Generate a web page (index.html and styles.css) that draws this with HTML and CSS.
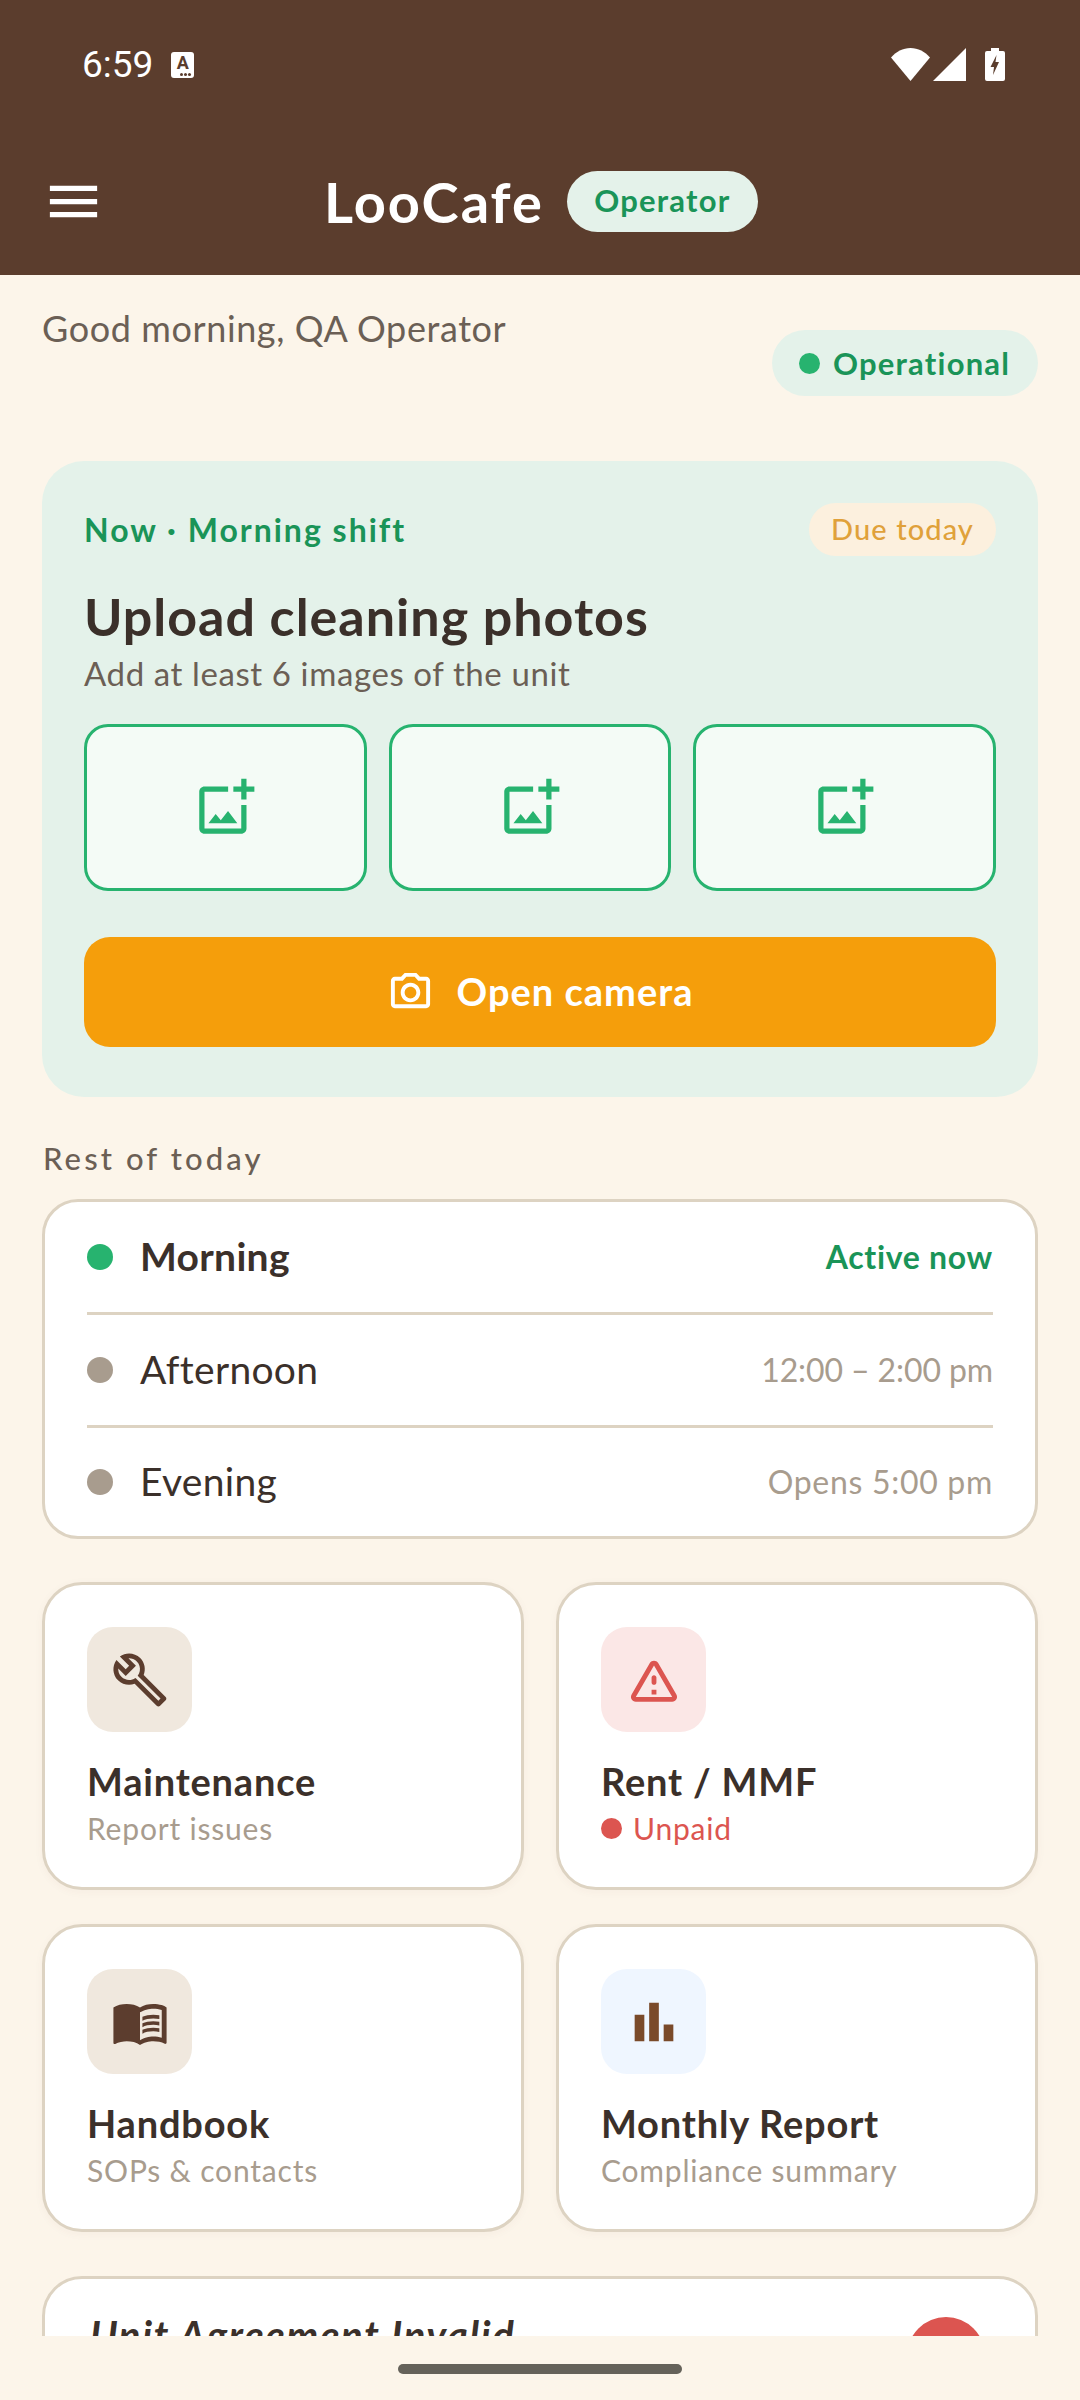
FILE: index.html
```html
<!DOCTYPE html>
<html lang="en">
<head>
    <meta charset="UTF-8">
    <meta name="viewport" content="width=device-width, initial-scale=1.0">
    <title>LooCafe</title>
    <link rel="stylesheet" href="styles.css">
</head>
<body>
    <header class="app-bar">
        <div class="status-bar">
            <div class="status-left">
                <span class="clock">6:59</span>
                <span class="a-badge">A</span>
            </div>
            <div class="status-right">
                <svg class="wifi" viewBox="0 0 39 33"><path d="M0 9.5C5 3.6 12 0 19.5 0S34 3.6 39 9.5L19.5 33z"/></svg>
                <svg class="signal" viewBox="0 0 33 33"><path d="M33 0v33H0z"/></svg>
                <svg class="battery" viewBox="0 0 20 33"><path fill-rule="evenodd" d="M6 0h8v3h4a2 2 0 0 1 2 2v26a2 2 0 0 1-2 2H2a2 2 0 0 1-2-2V5a2 2 0 0 1 2-2h4zM11.500 7 5.500 19h3.500l-1 8 6-13h-3.500z"/></svg>
            </div>
        </div>
        <div class="toolbar">
            <svg class="menu-icon" viewBox="0 0 24 24"><path d="M3 18h18v-2H3v2zm0-5h18v-2H3v2zm0-7v2h18V6H3z"/></svg>
            <div class="brand">
                <span class="brand-name">LooCafe</span>
                <span class="role-pill">Operator</span>
            </div>
        </div>
    </header>

    <main class="content">
        <div class="greeting-row">
            <div class="greeting">Good morning, QA Operator</div>
            <div class="state-pill"><span class="state-dot"></span>Operational</div>
        </div>

        <section class="now-card">
            <div class="now-head">
                <span class="now-label">Now · Morning shift</span>
                <span class="due-pill">Due today</span>
            </div>
            <h1 class="now-title">Upload cleaning photos</h1>
            <p class="now-sub">Add at least 6 images of the unit</p>
            <div class="photo-row">
                <div class="photo-slot"><svg viewBox="0 0 24 24"><use href="#add-photo"/></svg></div>
                <div class="photo-slot"><svg viewBox="0 0 24 24"><use href="#add-photo"/></svg></div>
                <div class="photo-slot"><svg viewBox="0 0 24 24"><use href="#add-photo"/></svg></div>
            </div>
            <div class="camera-btn">
                <svg viewBox="0 0 24 24"><path d="M20 4h-3.170L15 2H9L7.170 4H4c-1.100 0-2 .9-2 2v12c0 1.100.9 2 2 2h16c1.100 0 2-.9 2-2V6c0-1.100-.9-2-2-2zm0 14H4V6h4.050l1.830-2h4.240l1.830 2H20v12zM12 7c-2.760 0-5 2.240-5 5s2.240 5 5 5 5-2.240 5-5-2.240-5-5-5zm0 8c-1.650 0-3-1.350-3-3s1.350-3 3-3 3 1.350 3 3-1.350 3-3 3z"/></svg>
                <span class="camera-text">Open camera</span>
            </div>
        </section>

        <div class="section-label">Rest of today</div>
        <section class="shift-list">
            <div class="shift-row">
                <span class="shift-dot active"></span>
                <span class="shift-name active">Morning</span>
                <span class="shift-time active">Active now</span>
            </div>
            <div class="shift-row">
                <span class="shift-dot"></span>
                <span class="shift-name">Afternoon</span>
                <span class="shift-time">12:00 – 2:00 pm</span>
            </div>
            <div class="shift-row">
                <span class="shift-dot"></span>
                <span class="shift-name">Evening</span>
                <span class="shift-time opens">Opens 5:00 pm</span>
            </div>
        </section>

        <section class="tile-grid">
            <div class="tile">
                <div class="tile-icon beige">
                    <svg viewBox="0 0 24 24" fill="#5c3d2e"><path d="M22.610 18.990l-9.080-9.080c.93-2.340.45-5.100-1.440-7C9.790.61 6.210.4 3.660 2.260L7.500 6.110 6.080 7.520 2.250 3.690C.39 6.230.6 9.820 2.900 12.110c1.860 1.860 4.570 2.350 6.890 1.480l9.110 9.110c.39.39 1.020.39 1.410 0l2.300-2.300c.4-.38.4-1.010 0-1.410zm-3 1.600l-9.460-9.460c-.61.45-1.290.72-2 .82-1.360.2-2.790-.21-3.830-1.250C3.370 9.760 2.930 8.500 3 7.260l3.090 3.090 4.240-4.240-3.090-3.090c1.240-.07 2.490.37 3.440 1.310 1.080 1.080 1.490 2.570 1.240 3.960-.12.71-.42 1.370-.88 1.960l9.450 9.450-.88.88z"/></svg>
                </div>
                <div class="tile-title">Maintenance</div>
                <div class="tile-sub">Report issues</div>
            </div>
            <div class="tile">
                <div class="tile-icon pink">
                    <svg viewBox="0 0 24 24" fill="#dc5550"><path d="M12 5.990 19.530 19H4.470L12 5.990M2.740 18c-.77 1.330.19 3 1.730 3h15.060c1.540 0 2.500-1.670 1.730-3L13.730 4.990c-.77-1.330-2.690-1.330-3.460 0L2.740 18zM11 11v2c0 .55.45 1 1 1s1-.45 1-1v-2c0-.55-.45-1-1-1s-1 .45-1 1zm0 5h2v2h-2z"/></svg>
                </div>
                <div class="tile-title">Rent / MMF</div>
                <div class="tile-sub unpaid"><span class="unpaid-dot"></span>Unpaid</div>
            </div>
            <div class="tile">
                <div class="tile-icon beige">
                    <svg viewBox="0 0 24 24" fill="#5c3d2e"><path d="M21 5c-1.110-.35-2.330-.5-3.500-.5-1.950 0-4.050.4-5.500 1.500-1.450-1.100-3.550-1.500-5.500-1.500S2.450 4.900 1 6v14.650c0 .25.25.5.5.5.1 0 .15-.05.25-.05C3.100 20.450 5.050 20 6.500 20c1.950 0 4.050.4 5.500 1.500 1.350-.85 3.800-1.500 5.500-1.500 1.650 0 3.350.3 4.750 1.050.1.05.15.05.25.05.25 0 .5-.25.5-.5V6c-.6-.45-1.250-.75-2-1zm0 13.500c-1.100-.35-2.300-.5-3.500-.5-1.700 0-4.150.65-5.500 1.500V8c1.350-.85 3.800-1.500 5.500-1.500 1.200 0 2.400.15 3.500.5v11.500z"/><path d="M17.500 10.500c.88 0 1.730.09 2.500.26V9.240c-.79-.15-1.640-.24-2.500-.24-1.700 0-3.240.29-4.500.83v1.660c1.130-.64 2.700-.99 4.500-.99zM13 12.490v1.660c1.130-.64 2.700-.99 4.500-.99.88 0 1.730.09 2.500.26V11.900c-.79-.15-1.640-.24-2.500-.24-1.700 0-3.240.3-4.500.83zM17.500 14.330c-1.700 0-3.240.29-4.500.83v1.660c1.130-.64 2.700-.99 4.500-.99.88 0 1.730.09 2.500.26v-1.520c-.79-.16-1.640-.24-2.500-.24z"/></svg>
                </div>
                <div class="tile-title">Handbook</div>
                <div class="tile-sub">SOPs &amp; contacts</div>
            </div>
            <div class="tile">
                <div class="tile-icon blue">
                    <svg viewBox="0 0 24 24" fill="#7a4a2a"><path d="M4 9h4v11H4zM10 4h4v16h-4zM16 13h4v7h-4z"/></svg>
                </div>
                <div class="tile-title">Monthly Report</div>
                <div class="tile-sub">Compliance summary</div>
            </div>
        </section>

        <section class="alert-card">
            <div class="alert-title">Unit Agreement Invalid</div>
            <span class="alert-dot"></span>
        </section>
    </main>

    <div class="nav-bar"><span class="nav-handle"></span></div>

    <svg class="icon-defs" width="0" height="0">
        <symbol id="add-photo" viewBox="0 0 24 24"><path d="M18 20H4V6h9V4H4c-1.100 0-2 .9-2 2v14c0 1.100.9 2 2 2h14c1.100 0 2-.9 2-2v-9h-2v9zm-7.790-3.170l-1.960-2.360L5.500 18h11l-3.540-4.710zM20 4V1h-2v3h-3c.01.01 0 2 0 2h3v2.990c.01.01 2 0 2 0V6h3V4h-3z"/></symbol>
    </svg>
</body>
</html>
```

FILE: styles.css
```css
* {
    box-sizing: border-box;
}
html, body {
    margin: 0;
    padding: 0;
}
body {
    width: 1080px;
    height: 2400px;
    overflow: hidden;
    display: flex;
    flex-direction: column;
    font-family: "Lato", "Noto Sans", sans-serif;
    background-color: #fcf5ea;
    color: #3b302a;
}
.icon-defs {
    position: absolute;
}

/* top bar */
.app-bar {
    height: 275px;
    flex: none;
    background-color: #5b3d2d;
    color: #fff;
}
.status-bar {
    height: 129px;
    padding: 48px 75px 0 82px;
    display: flex;
    justify-content: space-between;
    align-items: flex-start;
}
.status-left {
    display: flex;
    align-items: center;
    height: 33px;
}
.clock {
    font-family: "Roboto", sans-serif;
    font-size: 37px;
    line-height: 33px;
}
.a-badge {
    position: relative;
    width: 23px;
    height: 26px;
    margin-left: 18px;
    border-radius: 3px;
    background: #fff;
    color: #5b3d2d;
    font: 700 18px/21px "Roboto", sans-serif;
    text-align: center;
}
/* the three little dots under the A */
.a-badge::after {
    content: "";
    position: absolute;
    right: 11px;
    bottom: 2px;
    width: 3px;
    height: 3px;
    border-radius: 50%;
    background: #5b3d2d;
    box-shadow: 4px 0 0 #5b3d2d, 8px 0 0 #5b3d2d;
}
.status-right {
    display: flex;
    gap: 3px;
}
.status-right svg {
    height: 33px;
    fill: #fff;
}
.wifi { width: 39px; }
.signal { width: 33px; }
.battery {
    width: 20px;
    margin-left: 16px;
}
.toolbar {
    height: 144px;
    padding-left: 42px;
    display: flex;
    align-items: center;
}
.menu-icon {
    width: 63px;
    height: 63px;
    fill: #fff;
    flex: none;
}
.brand {
    margin-left: 219px;
    display: flex;
    align-items: center;
    gap: 23px;
}
.brand-name {
    font-size: 56px;
    font-weight: 700;
    letter-spacing: 2px;
    line-height: 61px;
}
.role-pill {
    width: 191px;
    height: 61px;
    border-radius: 31px;
    background-color: #e4f2ea;
    color: #1a9458;
    font-size: 31px;
    font-weight: 700;
    letter-spacing: 1.2px;
    line-height: 59px;
    text-align: center;
}

/* page body */
.content {
    flex: 1;
    min-height: 0;
    overflow: hidden;
    padding: 30px 42px 0;
}
.greeting-row {
    display: flex;
    justify-content: space-between;
    align-items: flex-start;
}
.greeting {
    font-size: 36px;
    letter-spacing: 0.6px;
    line-height: 46px;
    color: #6b5f55;
}
.state-pill {
    width: 266px;
    height: 66px;
    margin-top: 25px;
    padding-left: 27px;
    border-radius: 33px;
    background-color: #e4f2ea;
    color: #1a9458;
    font-size: 31px;
    font-weight: 700;
    letter-spacing: 1.2px;
    display: flex;
    align-items: center;
    gap: 13px;
}
.state-dot {
    width: 21px;
    height: 21px;
    border-radius: 50%;
    background-color: #27b36f;
}

/* current task */
.now-card {
    height: 636px;
    margin-top: 65px;
    padding: 42px 42px 0;
    border-radius: 42px;
    background-color: #e4f2ea;
}
.now-head {
    height: 52px;
    display: flex;
    justify-content: space-between;
    align-items: center;
}
.now-label {
    font-size: 32px;
    font-weight: 700;
    letter-spacing: 2px;
    color: #1a9458;
}
.due-pill {
    width: 187px;
    height: 53px;
    border-radius: 27px;
    background-color: #fcf0de;
    color: #e0a13a;
    font-size: 29px;
    font-weight: 500;
    letter-spacing: 1.1px;
    line-height: 51px;
    text-align: center;
}
.now-title {
    margin: 31px 0 0;
    font-size: 52px;
    font-weight: 700;
    letter-spacing: 1px;
    line-height: 60px;
    color: #3b302a;
}
.now-sub {
    margin: 6px 0 0;
    font-size: 33px;
    letter-spacing: 0.6px;
    line-height: 42px;
    color: #6b5f55;
}
.photo-row {
    margin-top: 30px;
    display: grid;
    grid-template-columns: 283px 282px 1fr;
    gap: 22px;
}
.photo-slot {
    height: 167px;
    border: 3px solid #27b36f;
    border-radius: 24px;
    background-color: #f4fbf6;
    display: flex;
    justify-content: center;
    align-items: center;
}
.photo-slot svg {
    width: 63px;
    height: 63px;
    fill: #27b36f;
}
.camera-btn {
    height: 110px;
    margin-top: 46px;
    border-radius: 26px;
    background-color: #f59e0b;
    color: #fff;
    display: flex;
    justify-content: center;
    align-items: center;
    gap: 23px;
    font-size: 38px;
    font-weight: 700;
    letter-spacing: 1px;
}
.camera-btn svg {
    width: 47px;
    height: 47px;
    fill: #fff;
}
.camera-text {
    margin-bottom: 2px;
}

/* shifts */
.section-label {
    margin-top: 41px;
    font-size: 31px;
    font-weight: 500;
    letter-spacing: 3.1px;
    line-height: 40px;
    color: #6b5f55;
    padding-left: 1px;
}
.shift-list {
    margin-top: 21px;
    padding: 0 42px;
    border: 3px solid #ddd3c2;
    border-radius: 36px;
    background-color: #fff;
}
.shift-row {
    height: 113px;
    display: flex;
    align-items: center;
    border-bottom: 3px solid #ddd3c2;
}
.shift-row:last-child {
    height: 108px;
    border-bottom: 0;
}
.shift-dot {
    width: 26px;
    height: 26px;
    border-radius: 50%;
    background-color: #a89c8e;
    flex: none;
}
.shift-dot.active {
    background-color: #27b36f;
}
.shift-name {
    margin: 0 0 2px 27px;
    font-size: 39px;
    letter-spacing: 0.3px;
}
.shift-name.active {
    font-weight: 700;
}
.shift-time {
    margin: 0 0 2px auto;
    font-size: 32px;
    letter-spacing: -0.1px;
    color: #a89c8e;
}
.shift-time.opens {
    letter-spacing: 0.7px;
}
.shift-time.active {
    font-weight: 700;
    letter-spacing: 0.7px;
    color: #1a9458;
}

/* shortcut tiles */
.tile-grid {
    margin-top: 43px;
    display: grid;
    grid-template-columns: 1fr 1fr;
    gap: 34px 32px;
}
.tile {
    height: 308px;
    padding: 42px 42px;
    border: 3px solid #ddd3c2;
    border-radius: 40px;
    background-color: #fff;
    box-shadow: 0 2px 10px rgba(92, 61, 46, 0.04);
}
.tile-icon {
    width: 105px;
    height: 105px;
    border-radius: 26px;
    display: flex;
    justify-content: center;
    align-items: center;
}
.tile-icon svg {
    width: 58px;
    height: 58px;
}
.tile-icon.beige { background-color: #f0e8de; }
.tile-icon.pink { background-color: #fbe7e6; }
.tile-icon.blue { background-color: #eff6ff; }
.tile-title {
    margin-top: 27px;
    font-size: 38px;
    font-weight: 700;
    letter-spacing: 0.8px;
    line-height: 44px;
}
.tile-sub {
    margin-top: 6px;
    font-size: 30px;
    letter-spacing: 0.8px;
    line-height: 38px;
    color: #a89c8e;
}
.tile-sub.unpaid {
    display: flex;
    align-items: center;
    gap: 11px;
    color: #dc5550;
}
.unpaid-dot {
    width: 21px;
    height: 21px;
    border-radius: 50%;
    background-color: #dc5550;
}

/* cut off by the nav bar */
.alert-card {
    height: 200px;
    margin-top: 44px;
    padding: 34px 45px;
    border: 3px solid #ddd3c2;
    border-radius: 40px;
    background-color: #fff;
    display: flex;
    justify-content: space-between;
    align-items: flex-start;
}
.alert-title {
    font-size: 40px;
    font-weight: 700;
    font-style: italic;
    letter-spacing: 1.7px;
    line-height: 44px;
}
.alert-dot {
    width: 78px;
    height: 78px;
    margin: 4px 5px 0 0;
    border-radius: 50%;
    background-color: #dc5550;
    flex: none;
}
.nav-bar {
    height: 64px;
    flex: none;
    background-color: #fcf5ea;
    display: flex;
    justify-content: center;
    padding-top: 28px;
}
.nav-handle {
    width: 284px;
    height: 10px;
    border-radius: 5px;
    background-color: #65625a;
}
```
